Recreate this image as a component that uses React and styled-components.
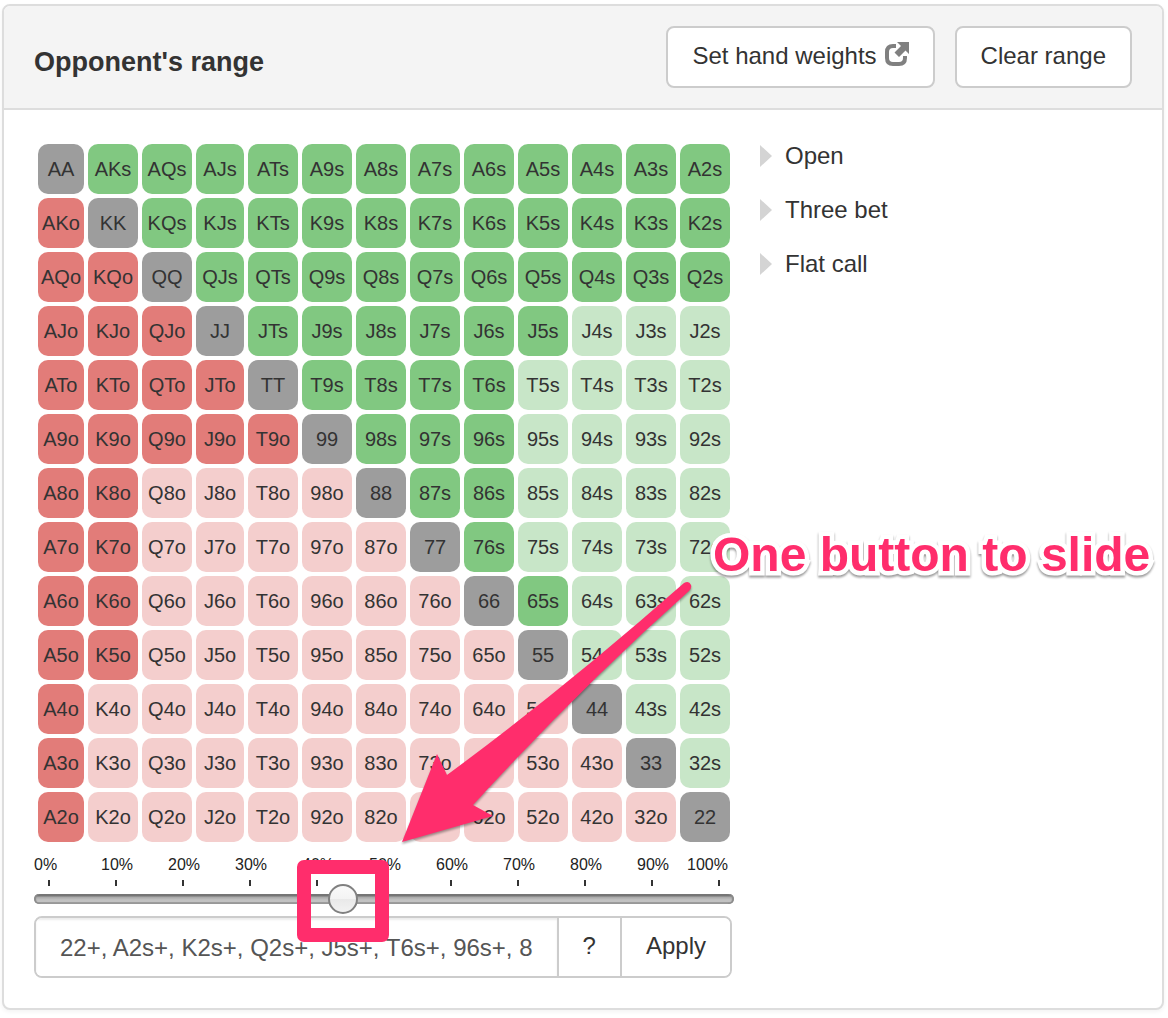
import React, { useState } from 'react';
import styled, { createGlobalStyle } from 'styled-components';

const PINK = '#ff2d6c';

const GlobalStyle = createGlobalStyle`
  *, *::before, *::after { box-sizing: border-box; }
  body {
    margin: 0;
    background: #fff;
    color: #333;
    font-family: "Liberation Sans", Arial, Helvetica, sans-serif;
    font-size: 24px;
    line-height: 34px;
  }
  button, input { font: inherit; color: inherit; }
`;

const Page = styled.main`
  padding: 4px 4px 8px 2px;
`;

const Panel = styled.section`
  position: relative;
  border: 2px solid #ddd;
  border-radius: 8px;
  background: #fff;
  box-shadow: 0 2px 4px rgba(0, 0, 0, 0.05);
`;

const PanelHeader = styled.header`
  display: flex;
  align-items: center;
  gap: 20px;
  padding: 20px 30px;
  background: #f4f4f4;
  border-bottom: 2px solid #ddd;
  border-radius: 6px 6px 0 0;
`;

const Title = styled.h1`
  flex: 1;
  margin: 0;
  padding-top: 10px;
  font-size: 27px;
  font-weight: 700;
  line-height: 34px;
`;

const Button = styled.button`
  display: flex;
  align-items: center;
  gap: 8px;
  height: 62px;
  padding: 0 24px 2px;
  border: 2px solid #ccc;
  border-radius: 8px;
  background: #fff;
  cursor: pointer;
`;

const ButtonIcon = styled.svg`
  width: 24px;
  height: 24px;
  margin-bottom: 4px;
`;

const PanelBody = styled.div`
  display: flex;
  align-items: flex-start;
  gap: 26px;
  padding: 34px 30px 30px;
`;

const RangeColumn = styled.div`
  width: 700px;
`;

const HandGrid = styled.div`
  display: grid;
  grid-template-columns: 46px 50px 50px 48px repeat(9, 50px);
  grid-auto-rows: 50px;
  gap: 4px;
  padding-left: 4px;
`;

const cellColors = {
  pair: '#9d9d9d',
  suited: '#81c881',
  suitedOff: '#c8e6c8',
  offsuit: '#e27c79',
  offsuitOff: '#f4cecd',
};

const Hand = styled.button`
  padding: 0;
  border: 0;
  border-radius: 10px;
  background: ${({ $kind }) => cellColors[$kind]};
  font-size: 20px;
  line-height: 50px;
  text-align: center;
  white-space: nowrap;
  cursor: pointer;
`;

const ScaleLabels = styled.div`
  display: grid;
  grid-template-columns: repeat(9, 67px) 50px auto;
  margin-top: 13px;
  font-size: 16px;
  line-height: 20px;
  color: #222;
`;

const Ticks = styled.div`
  display: flex;
  justify-content: space-between;
  padding: 5px 14px 0;
`;

const Tick = styled.span`
  width: 2px;
  height: 6px;
  background: #333;
`;

const Slider = styled.input`
  display: block;
  appearance: none;
  width: 100%;
  height: 30px;
  margin: -2px 0 0;
  background: transparent;

  &::-webkit-slider-runnable-track {
    height: 10px;
    border-radius: 5px;
    background: linear-gradient(#6e6e6e 0, #777 20%, #a8a8a8 30%, #c2c2c2 60%, #c2c2c2 80%, #9c9c9c 80%);
    box-shadow: inset 2px 0 1px #8a8a8a, inset -2px 0 1px #8a8a8a;
  }

  &::-webkit-slider-thumb {
    appearance: none;
    width: 30px;
    height: 30px;
    margin-top: -10px;
    border: 2px solid #808080;
    border-radius: 50%;
    background: linear-gradient(#fafafa 0%, #f3f3f3 50%, #e9e9e9 52%, #f2f2f2 100%);
  }
`;

const InputGroup = styled.form`
  display: flex;
  width: 698px;
  height: 62px;
  margin-top: 2px;
  border: 2px solid #ccc;
  border-radius: 8px;
  overflow: hidden;
`;

const RangeInput = styled.input`
  flex: 1;
  min-width: 0;
  padding: 2px 24px 0;
  border: 0;
  color: #555;
  background: #fff;
  box-shadow: inset 0 2px 2px rgba(0, 0, 0, 0.075);
`;

const GroupButton = styled.button`
  padding: 0 24px 2px;
  border: 0;
  border-left: 2px solid #ccc;
  background: #fff;
  cursor: pointer;
`;

const CategoryList = styled.ul`
  display: flex;
  flex-direction: column;
  gap: 20px;
  margin: -5px 0 0;
  padding: 0;
  list-style: none;
`;

const CategoryButton = styled.button`
  display: flex;
  align-items: center;
  gap: 13px;
  padding: 0;
  border: 0;
  background: none;
  cursor: pointer;

  &::before {
    content: "";
    border-style: solid;
    border-width: 11px 0 11px 12px;
    border-color: transparent transparent transparent #d4d4d4;
  }
`;

const Annotation = styled.svg`
  position: absolute;
  left: -4px;
  top: -6px;
  width: 1168px;
  height: 1000px;
  overflow: visible;
  pointer-events: none;
`;

const Callout = styled.p`
  position: absolute;
  left: 709px;
  top: 521px;
  margin: 0;
  color: ${PINK};
  font-size: 48px;
  font-weight: 700;
  line-height: 56px;
  white-space: nowrap;
  -webkit-text-stroke: 9px #fff;
  paint-order: stroke fill;
  stroke-linejoin: round;
  filter: drop-shadow(0 2px 1px rgba(0, 0, 0, 0.4));
  pointer-events: none;
`;

const RANKS = ['A', 'K', 'Q', 'J', 'T', '9', '8', '7', '6', '5', '4', '3', '2'];

// How many columns of each row are in range, counted from the left (suited half).
const SUITED_UNTIL = [13, 13, 13, 10, 9, 9, 9, 9, 10, 0, 0, 0, 0];
// How many columns of each row are in range (offsuit half).
const OFFSUIT_UNTIL = [0, 1, 2, 3, 4, 5, 2, 2, 2, 2, 1, 1, 1];

const HANDS = RANKS.flatMap((rowRank, row) =>
  RANKS.map((colRank, col) => {
    if (row === col) return { name: rowRank + colRank, kind: 'pair', on: true };
    if (col > row) {
      const on = col < SUITED_UNTIL[row];
      return { name: `${rowRank}${colRank}s`, kind: on ? 'suited' : 'suitedOff', on };
    }
    const on = col < OFFSUIT_UNTIL[row];
    return { name: `${colRank}${rowRank}o`, kind: on ? 'offsuit' : 'offsuitOff', on };
  })
);

const PERCENTS = [0, 10, 20, 30, 40, 50, 60, 70, 80, 90, 100];

function ShareIcon() {
  return (
    <ButtonIcon viewBox="0 0 24 24" aria-hidden="true">
      <path
        d="M11 4H8Q2 4 2 10v6q0 6 6 6h6q6 0 6-6v-2"
        fill="none"
        stroke="#808080"
        strokeWidth="4"
      />
      <path d="M12 0h12v12l-3.500-3.500-6.500 6.500-4.500-4.500 6.500-6.500z" fill="#808080" stroke="#fff" strokeWidth="3" paintOrder="stroke" />
    </ButtonIcon>
  );
}

export default function App() {
  const [percent, setPercent] = useState(43.9);
  const [range, setRange] = useState('22+, A2s+, K2s+, Q2s+, J5s+, T6s+, 96s+, 86s+, 76s, 65s, A2o+, K5o+, Q9o+, J9o+, T9o');

  return (
    <Page>
      <GlobalStyle />
      <Panel>
        <PanelHeader>
          <Title>Opponent's range</Title>
          <Button type="button">
            Set hand weights
            <ShareIcon />
          </Button>
          <Button type="button">Clear range</Button>
        </PanelHeader>
        <PanelBody>
          <RangeColumn>
            <HandGrid>
              {HANDS.map(({ name, kind, on }) => (
                <Hand key={name} type="button" $kind={kind} aria-pressed={on}>
                  {name}
                </Hand>
              ))}
            </HandGrid>
            <ScaleLabels>
              {PERCENTS.map((p) => (
                <span key={p}>{p}%</span>
              ))}
            </ScaleLabels>
            <Ticks>
              {PERCENTS.map((p) => (
                <Tick key={p} />
              ))}
            </Ticks>
            <Slider
              type="range"
              aria-label="Range percentage"
              min="0"
              max="100"
              step="0.1"
              value={percent}
              onChange={(e) => setPercent(e.target.value)}
            />
            <InputGroup onSubmit={(e) => e.preventDefault()}>
              <RangeInput aria-label="Range" value={range} onChange={(e) => setRange(e.target.value)} />
              <GroupButton type="button">?</GroupButton>
              <GroupButton type="submit">Apply</GroupButton>
            </InputGroup>
          </RangeColumn>
          <CategoryList>
            {['Open', 'Three bet', 'Flat call'].map((label) => (
              <li key={label}>
                <CategoryButton type="button">{label}</CategoryButton>
              </li>
            ))}
          </CategoryList>
        </PanelBody>
        <Annotation viewBox="0 0 1168 1000" aria-hidden="true">
          <path
            d="M402 842L437 754L447 775Q565 688 684 583Q689 580 691 585Q692 588 689 591Q580 688 473 805L493 816Z"
            fill={PINK}
            filter="drop-shadow(0 2px 1px rgba(0,0,0,0.35))"
          />
          <rect x="304" y="867" width="78" height="68" fill="none" stroke={PINK} strokeWidth="14" strokeLinejoin="round" />
        </Annotation>
        <Callout>One button to slide</Callout>
      </Panel>
    </Page>
  );
}
